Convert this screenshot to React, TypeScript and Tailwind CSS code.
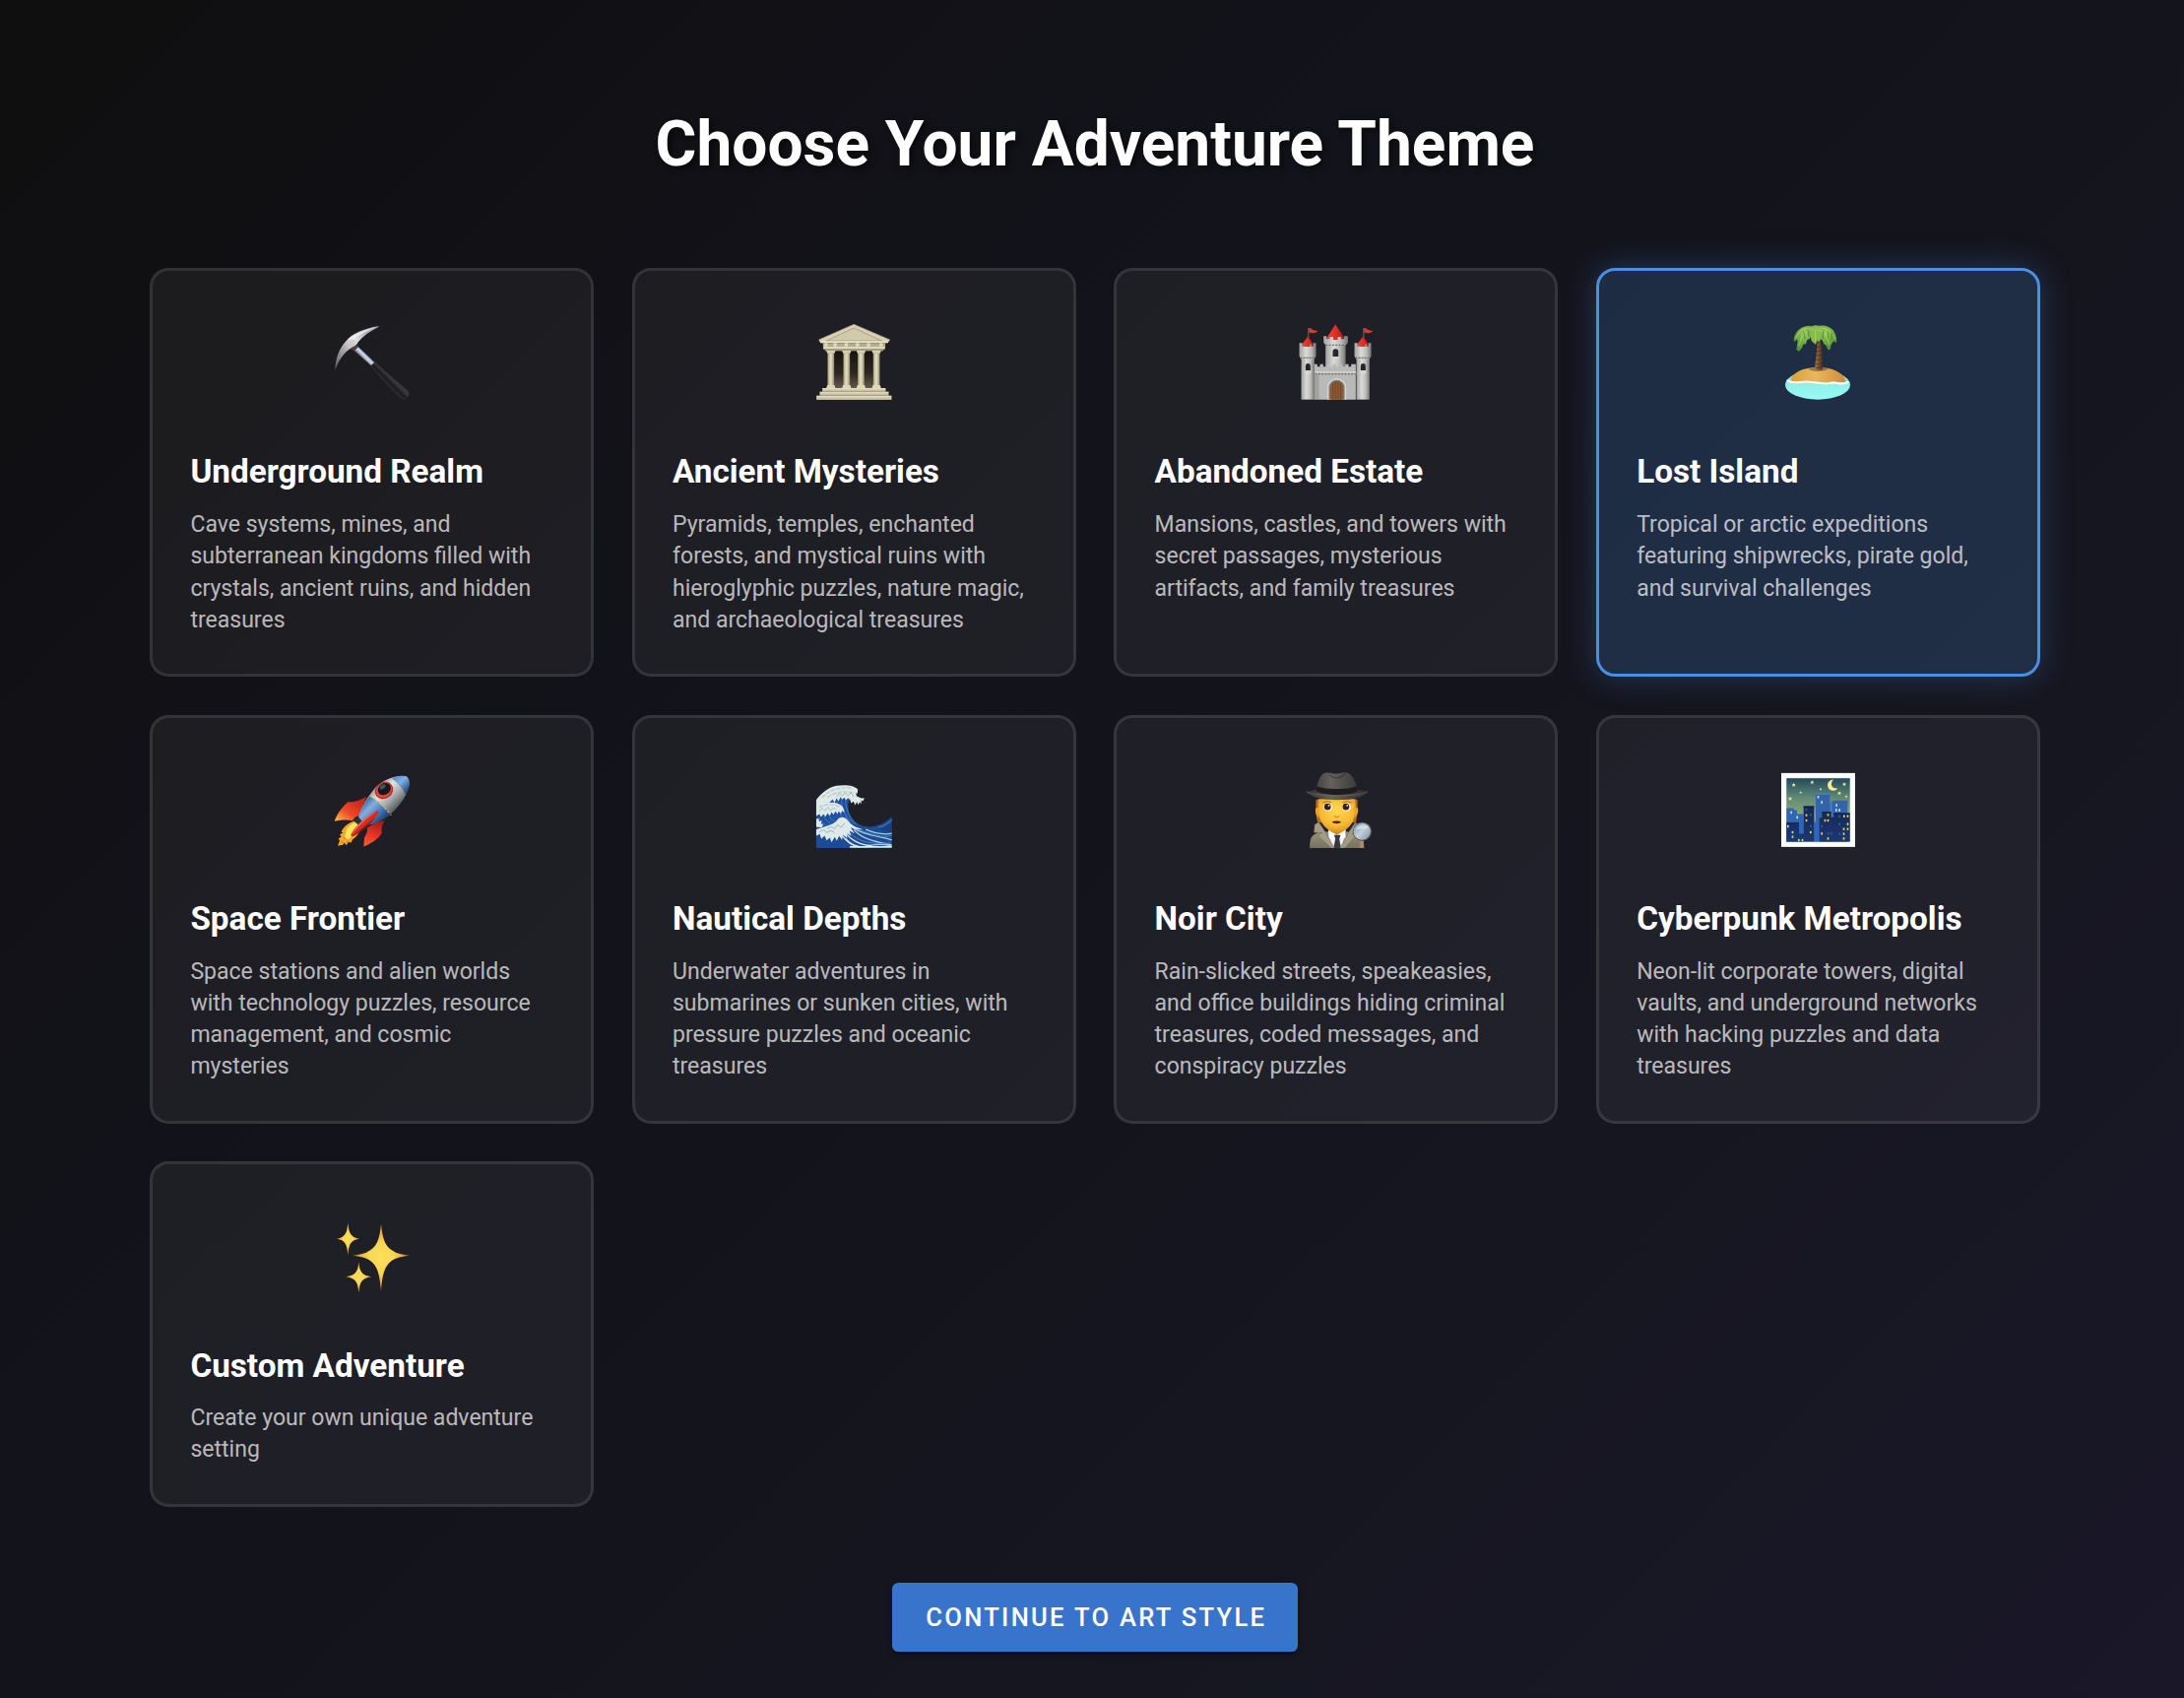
import type { ReactNode } from "react";

function Pickaxe() {
  return (
    <svg viewBox="53 50 240 240" className="size-20">
      <defs>
        <linearGradient id="pkHead" x1="60" y1="190" x2="190" y2="62" gradientUnits="userSpaceOnUse">
          <stop offset="0" stopColor="#5c5a5c" />
          <stop offset=".3" stopColor="#a5a2a4" />
          <stop offset=".55" stopColor="#e8e6e7" />
          <stop offset=".75" stopColor="#b9b7b8" />
          <stop offset="1" stopColor="#8b93a0" />
        </linearGradient>
        <linearGradient id="pkRod" x1="142" y1="158" x2="155" y2="145" gradientUnits="userSpaceOnUse">
          <stop offset="0" stopColor="#7c6f72" />
          <stop offset=".45" stopColor="#d9dbe6" />
          <stop offset=".75" stopColor="#9dbbe8" />
          <stop offset="1" stopColor="#4d5260" />
        </linearGradient>
        <linearGradient id="pkGrip" x1="216" y1="236" x2="230" y2="222" gradientUnits="userSpaceOnUse">
          <stop offset="0" stopColor="#2a2a2a" />
          <stop offset=".5" stopColor="#1b1c1d" />
          <stop offset="1" stopColor="#37383b" />
        </linearGradient>
      </defs>
      <path d="M112 124 L126 121 L181 173 L170 183 L118 137Z" fill="url(#pkRod)" />
      <path d="M170 183 L181 172 C200 190 250 232 281 259 C288 267 283 282 270 284 C262 284 258 279 252 273 C226 249 196 216 170 183Z" fill="url(#pkGrip)" stroke="#414144" strokeWidth="1.2" />
      <path d="M60 196 C61 162 71 132 92 109 C113 84 146 70 193 62 C193 64 192 66 189 67 C168 77 146 91 130 111 C128 118 122 122 115 125 L105 132 C86 144 71 168 60 196Z" fill="url(#pkHead)" />
      <path d="M93 110 L112 101 L129 110 L113 131 L101 130Z" fill="#c9c6c8" opacity=".6" />
      <path d="M99 104 C120 84 151 72 188 64 C160 76 135 87 119 101Z" fill="#f4f3f4" opacity=".75" />
      <path d="M105 132 L115 125 L129 119 L131 126 L118 138Z" fill="#454042" />
    </svg>
  );
}

function Temple() {
  return (
    <svg viewBox="51.6 50 240 240" className="size-20">
      <defs>
        <linearGradient id="tpCol" x1="0" x2="1" y1="0" y2="0">
          <stop offset="0" stopColor="#9b9478" />
          <stop offset=".35" stopColor="#e6dfc3" />
          <stop offset=".65" stopColor="#d8d0b0" />
          <stop offset="1" stopColor="#8c8468" />
        </linearGradient>
        <linearGradient id="tpDark" x1="0" x2="0" y1="0" y2="1">
          <stop offset="0" stopColor="#151311" />
          <stop offset=".6" stopColor="#2c2722" />
          <stop offset="1" stopColor="#655b4a" />
        </linearGradient>
        <linearGradient id="tpStone" x1="0" x2="0" y1="0" y2="1">
          <stop offset="0" stopColor="#eae3c8" />
          <stop offset="1" stopColor="#b9b08f" />
        </linearGradient>
      </defs>
      <rect x="94" y="136" width="156" height="116" fill="url(#tpDark)" />
      <path d="M172 57 L282 104 L276 113 H70 L65 104Z" fill="#d9d1b3" />
      <path d="M172 68 L257 107 H89Z" fill="#d2caab" />
      <path d="M172 57 L282 104 M172 57 L65 104" stroke="#a59d80" strokeWidth="2" fill="none" />
      <path d="M172 68 L257 107 H89Z" fill="none" stroke="#958d70" strokeWidth="2" />
      <rect x="70" y="108" width="206" height="6" fill="#e9e2c8" />
      <rect x="78" y="114" width="190" height="13" fill="#b5ad8f" />
      {[82, 110, 144, 178, 212, 250].map((x) => (
        <rect key={x} x={x} y="114" width="10" height="10" fill="#e1dabd" />
      ))}
      <rect x="79" y="125" width="188" height="8" fill="#e2dabc" />
      <rect x="84" y="133" width="178" height="5" fill="#a69e80" />
      {[92, 140, 184, 231].map((x) => (
        <g key={x}>
          <rect x={x} y="144" width="20" height="100" fill="url(#tpCol)" />
          <path d={`M${x - 4} 137 h28 l-3 8 h-22z`} fill="#d7cfb1" />
          <path d={`M${x - 4} 252 l3 -10 h22 l3 10z`} fill="#ded7ba" />
          <path d={`M${x + 6} 146 v94 M${x + 14} 146 v94`} stroke="#b9b192" strokeWidth="1" />
        </g>
      ))}
      <rect x="76" y="251" width="193" height="11" fill="url(#tpStone)" />
      <rect x="68" y="262" width="210" height="12" fill="url(#tpStone)" />
      <rect x="58" y="274" width="229" height="13" fill="url(#tpStone)" />
    </svg>
  );
}

function Castle() {
  return (
    <svg viewBox="50.4 50 240 240" className="size-20">
      <defs>
        <linearGradient id="csWall" x1="0" x2="1" y1="0" y2="0">
          <stop offset="0" stopColor="#a3a4a1" />
          <stop offset=".4" stopColor="#dadbd8" />
          <stop offset=".7" stopColor="#bdbebb" />
          <stop offset="1" stopColor="#777876" />
        </linearGradient>
        <linearGradient id="csRoof" x1="0" x2="1" y1="0" y2="0">
          <stop offset="0" stopColor="#e8453a" />
          <stop offset=".5" stopColor="#dd3025" />
          <stop offset="1" stopColor="#a01c17" />
        </linearGradient>
      </defs>
      <rect x="138" y="112" width="61" height="80" fill="url(#csWall)" />
      <path d="M168 57 L195 98 V105 H142 V98Z" fill="url(#csRoof)" />
      <path d="M132 93 h9 v9 h10 v-7 h10 v9 h14 v-9 h10 v7 h10 v-9 h11 v20 l-6 7 H138 l-6 -7z" fill="url(#csWall)" />
      <path d="M138 120 H199" stroke="#6f706d" strokeWidth="4" strokeDasharray="6 4" />
      <path d="M160 155 V141 a8.500 9.500 0 0 1 17 0 V155Z" fill="#27262b" />
      <path d="M158 155 H179 V160 L173 165 H164 L158 160Z" fill="#d5d6d3" />
      <path d="M103 178 h10 v8 h8 v-8 h10 v8 h9 v-8 h10 v8 h10 v-8 h10 v8 h9 v-8 h10 v8 h9 v-8 h10 v8 h8 v-8 h14 V286 H103Z" fill="#b9bab7" />
      <rect x="106" y="201" width="126" height="4" fill="#dedfdc" />
      <path d="M106 208 H232" stroke="#777875" strokeWidth="5" strokeDasharray="6 4" />
      <path d="M104 210 V286 H118 V210Z" fill="#777876" opacity=".35" />
      <path d="M143 286 V250 a29 29 0 0 1 58 0 V286Z" fill="#d2d3d0" />
      <path d="M148 286 V250 a24 24 0 0 1 48 0 V286Z" fill="#797a76" />
      <path d="M152 286 V250 a20 20 0 0 1 40 0 V286Z" fill="#8b5a34" />
      <path d="M160 235 V286 M168 231 V286 M176 231 V286 M184 235 V286" stroke="#6b4123" strokeWidth="2" />
      {[0, 168].map((dx) => (
        <g key={dx} transform={`translate(${dx} 0)`}>
          <rect x="64" y="160" width="40" height="126" fill="url(#csWall)" />
          <path d="M86 68 V98" stroke="#7c7776" strokeWidth="2.500" />
          <path d="M87 68 C95 67 96 74 103 75 L115 78 L106 83 C98 85 92 82 87 82Z" fill="#d93a30" />
          <path d="M84 94 L102 118 V125 H66 V118Z" fill="url(#csRoof)" />
          <path d="M58 114 h9 v10 h9 v-7 h0 v8 h15 v-8 h3 v7 h7 v-10 h8 V154 l-6 9 H64 l-6 -9z" fill="url(#csWall)" />
          <path d="M61 159 H106" stroke="#6d6e6b" strokeWidth="4" strokeDasharray="6 3" />
          <path d="M77 198 V185 a7.500 9 0 0 1 15 0 V198Z" fill="#27262b" />
          <path d="M75 198 H94 V203 L88 208 H81 L75 203Z" fill="#d8d9d6" />
        </g>
      ))}
    </svg>
  );
}

function Island() {
  return (
    <svg viewBox="49 50 240 240" className="size-20">
      <defs>
        <linearGradient id="isSand" x1="0" x2="1" y1="0" y2="0">
          <stop offset="0" stopColor="#d99f3a" />
          <stop offset=".45" stopColor="#e8b85e" />
          <stop offset="1" stopColor="#d18a38" />
        </linearGradient>
        <linearGradient id="isSea" x1="0" x2="0" y1="0" y2="1">
          <stop offset="0" stopColor="#8be4e0" />
          <stop offset="1" stopColor="#97fbf4" />
        </linearGradient>
        <radialGradient id="isLeaf" cx=".5" cy=".3" r=".7">
          <stop offset="0" stopColor="#9dcc5a" />
          <stop offset=".6" stopColor="#69a63c" />
          <stop offset="1" stopColor="#4f8f38" />
        </radialGradient>
        <linearGradient id="isTrunk" x1="0" x2="1" y1="0" y2="0">
          <stop offset="0" stopColor="#9a7549" />
          <stop offset=".5" stopColor="#7a5636" />
          <stop offset="1" stopColor="#4a2f20" />
        </linearGradient>
      </defs>
      <ellipse cx="169" cy="241" rx="99" ry="45" fill="url(#isSea)" />
      <path d="M86 228 C92 203 125 188 169 188 C218 188 250 206 256 233 C240 243 229 227 211 233 C186 242 166 231 145 231 C120 229 105 238 86 228Z" fill="url(#isSand)" />
      <path d="M140 194 C153 187 190 187 201 194 C183 202 156 202 140 194Z" fill="#6b4a28" opacity=".6" />
      <path d="M77 228 C91 241 120 229 143 232 C166 235 190 240 207 236 C224 229 235 245 261 233" fill="none" stroke="#fff" strokeWidth="6" strokeLinecap="round" />
      <path d="M166 100 C170 130 162 165 160 194 Q172 200 184 194 C183 160 183 128 176 98Z" fill="url(#isTrunk)" />
      {[112, 125, 138, 151, 164, 177, 188].map((y) => (
        <path key={y} d={`M164 ${y} Q172 ${y + 5} 182 ${y - 4}`} stroke="#35231b" strokeWidth="2" fill="none" />
      ))}
      <path d="M160 64 C139 56 112 66 103 84 C96 94 96 103 97 111 L104 103 L108 108 L106 121 L104 134 L112 139 L120 130 L126 117 L132 118 L137 104 L144 102 L150 92Z" fill="url(#isLeaf)" />
      <path d="M161 66 C176 55 206 60 218 77 C225 88 228 102 226 113 L217 108 L209 121 L207 134 L200 134 L195 122 L188 117 L182 104 L174 102 L167 84Z" fill="url(#isLeaf)" />
      <path d="M150 67 C154 57 174 58 180 69 L181 86 L175 109 L167 105 L163 118 L157 114 L150 107 L146 87Z" fill="#86bb4d" />
      <path d="M154 72 C134 73 119 89 112 123 M165 73 C185 75 199 92 204 118 M162 69 V111 M149 68 C126 68 111 79 102 99 M174 68 C199 67 214 82 222 101" fill="none" stroke="#b7da75" strokeWidth="2" />
      <path d="M126 78 L130 102 M139 73 L142 93 M186 77 L185 101 M200 79 L201 100 M212 83 L211 104" stroke="#3f7530" strokeWidth="2" />
    </svg>
  );
}

function Rocket() {
  return (
    <svg viewBox="53 44.4 240 240" className="size-20">
      <defs>
        <linearGradient id="rkBody" x1="168" y1="105" x2="233" y2="172" gradientUnits="userSpaceOnUse">
          <stop offset="0" stopColor="#8a9094" />
          <stop offset=".35" stopColor="#dfe3e3" />
          <stop offset=".7" stopColor="#a5abac" />
          <stop offset="1" stopColor="#5f6568" />
        </linearGradient>
        <linearGradient id="rkBlue" x1="145" y1="140" x2="205" y2="200" gradientUnits="userSpaceOnUse">
          <stop offset="0" stopColor="#365c92" />
          <stop offset=".35" stopColor="#85aee0" />
          <stop offset=".7" stopColor="#457ab9" />
          <stop offset="1" stopColor="#1f4274" />
        </linearGradient>
        <linearGradient id="rkNose" x1="245" y1="68" x2="283" y2="108" gradientUnits="userSpaceOnUse">
          <stop offset="0" stopColor="#5f93d3" />
          <stop offset=".4" stopColor="#7fb0e8" />
          <stop offset="1" stopColor="#234a85" />
        </linearGradient>
        <linearGradient id="rkFin" x1="125" y1="135" x2="70" y2="205" gradientUnits="userSpaceOnUse">
          <stop offset="0" stopColor="#c9281d" />
          <stop offset=".55" stopColor="#ee4a28" />
          <stop offset="1" stopColor="#f7b545" />
        </linearGradient>
        <linearGradient id="rkFin2" x1="185" y1="205" x2="160" y2="282" gradientUnits="userSpaceOnUse">
          <stop offset="0" stopColor="#a5201a" />
          <stop offset=".5" stopColor="#e93326" />
          <stop offset="1" stopColor="#f0622f" />
        </linearGradient>
      </defs>
      <path d="M118 203 C98 208 82 225 79 236 L84 238 L74 243 L79 250 L70 256 L74 262 L68 278 L84 275 L88 268 L94 276 L101 266 L108 269 L113 259 C128 249 139 230 143 217Z" fill="#f5a52e" />
      <path d="M120 207 C103 213 93 226 92 240 L88 252 L100 258 L111 250 C125 243 134 229 138 219Z" fill="#ffe45c" />
      <path d="M86 252 l5 4 M79 265 l5 3 M96 263 l3 4" stroke="#d85b1c" strokeWidth="3" />
      <path d="M156 128 C132 142 112 146 99 144 C81 159 65 181 58 203 C77 199 98 198 113 201 C118 193 125 187 133 186Z" fill="url(#rkFin)" />
      <path d="M211 201 C205 212 199 225 203 238 C191 257 173 270 147 280 L149 252 C155 244 160 232 157 223 L187 205Z" fill="url(#rkFin2)" />
      <path d="M132 190 C139 160 158 130 185 98 C210 75 242 62 276 66 C286 72 287 86 284 101 C275 132 250 165 222 187 C197 204 169 213 148 216Z" fill="url(#rkBody)" />
      <path d="M132 190 C137 168 150 145 166 126 C188 140 211 164 231 181 C206 201 174 214 148 216Z" fill="url(#rkBlue)" />
      <path d="M240 69 C253 65 264 64 276 66 C287 71 288 86 284 101 C282 109 279 116 275 124 C269 105 255 87 234 73Z" fill="url(#rkNose)" />
      <path d="M234 73 C253 84 269 104 275 124" fill="none" stroke="#656c70" strokeWidth="2.500" strokeDasharray="4 3" />
      <path d="M166 126 C187 137 210 161 231 184" fill="none" stroke="#d8b83c" strokeWidth="3.500" strokeDasharray="9 5" />
      <ellipse cx="209" cy="109" rx="29" ry="25" transform="rotate(-35 209 109)" fill="#b2261f" />
      <ellipse cx="209" cy="108" rx="26" ry="22" transform="rotate(-35 209 108)" fill="#e8433a" />
      <ellipse cx="210" cy="105" rx="21" ry="17" transform="rotate(-35 210 105)" fill="#16191c" />
      <ellipse cx="205" cy="98" rx="10" ry="6" transform="rotate(-35 205 98)" fill="#6d7a80" opacity=".6" />
      <path d="M122 195 L131 190 L144 206 L138 219 L118 203Z" fill="#25333f" />
      <path d="M190 170 C195 174 190 184 183 192 C166 211 137 239 111 250 C108 248 107 244 110 240 C123 214 157 188 190 170Z" fill="#d92a20" />
      <path d="M190 170 C159 192 129 219 111 244 C116 223 151 190 190 170Z" fill="#fc6a55" />
      <path d="M111 250 C137 239 166 211 183 192 L174 198 C151 216 129 237 111 250Z" fill="#7c1a15" />
    </svg>
  );
}

function Wave() {
  return (
    <svg viewBox="51.6 44.4 240 240" className="size-20">
      <defs>
        <linearGradient id="wvBlue" x1="0" x2="1" y1="0" y2="1">
          <stop offset="0" stopColor="#173a7e" />
          <stop offset=".5" stopColor="#2459ac" />
          <stop offset="1" stopColor="#123066" />
        </linearGradient>
        <clipPath id="wvClip"><rect x="57" y="90" width="231" height="195" /></clipPath>
      </defs>
      <g clipPath="url(#wvClip)">
        <path d="M57 285 V138 C80 115 105 100 145 100 L180 125 C155 132 150 150 158 180 C168 205 190 218 219 221 C248 218 268 205 288 190 V285Z" fill="url(#wvBlue)" />
        <path d="M122 132 C118 150 126 175 142 200 M135 132 C132 155 142 182 160 205 M147 130 C144 155 154 185 180 214 M64 190 C72 205 85 217 98 220 M80 188 C88 202 98 210 112 213 M97 188 C105 200 113 205 126 208" fill="none" stroke="#4b8fd2" strokeWidth="2" />
        <path d="M57 138 C74 117 96 99 119 95 C145 90 175 94 184 106 L183 119 L179 116 L180 126 L195 133 L204 132 L200 142 L194 139 L196 150 L190 144 L186 153 L181 144 L176 154 L171 143 L164 148 L160 137 L154 132 L148 139 L143 131 L137 137 L131 129 L126 142 L119 133 L113 147 L108 137 L97 146 C116 145 136 151 140 163 L144 176 L136 171 L133 180 L126 172 L122 181 L116 173 L110 183 L104 175 L99 187 L92 179 L85 190 L80 181 L72 190 L67 181 L57 188Z" fill="#dfe9e8" />
        <path d="M75 131 C98 107 125 99 165 101 M92 130 C111 115 138 110 170 116 M66 160 C86 150 111 149 130 160" fill="none" stroke="#b9cccd" strokeWidth="4" strokeDasharray="13 4" />
        <path d="M120 128 L128 118 L137 126 L145 116 L154 125 L164 115 L171 128 M67 174 L75 162 L84 171 L93 160 L101 171 L110 161 L117 169" fill="none" stroke="#9db5bd" strokeWidth="2.500" />
        <path d="M57 197 L64 194 L67 204 L74 200 L72 211 L79 212 L75 222 L57 220Z" fill="#dfe9e8" />
        <path d="M57 228 C80 216 107 215 122 198 C132 187 145 190 153 200 C175 222 226 224 255 216 C270 210 281 198 288 191 V204 C272 220 258 224 244 225 C268 234 281 238 288 234 V285 H57Z" fill="#1c4d94" />
        <path d="M163 219 C205 247 244 246 288 260 M172 229 C204 263 250 267 288 275 M208 228 C241 242 267 244 288 240 M147 255 C161 275 181 282 208 281 C230 274 255 269 288 279" fill="none" stroke="#a9c9e0" strokeWidth="4" />
        <path d="M187 229 C226 243 260 255 288 246 M162 239 C182 267 237 275 284 269 M247 221 C266 218 277 208 288 198" fill="none" stroke="#4d82bc" strokeWidth="3" />
        <path d="M57 228 C84 218 110 215 122 198 C132 187 145 190 153 200 C165 216 178 222 200 228 C182 229 169 225 162 221 L174 240 L159 232 L164 248 L149 238 L152 255 L139 244 L136 260 L127 248 L120 263 L114 251 L104 267 L99 253 L89 261 L83 247 L73 257 L68 242 L57 248Z" fill="#dfe9e8" />
        <path d="M90 226 L105 219 L112 226 L123 214 L133 222 L144 208 M67 235 L80 229 L89 237 L103 231 L114 238" fill="none" stroke="#9db5bd" strokeWidth="3" />
        <path d="M135 244 C147 262 166 279 192 281 M146 236 C160 258 190 276 226 277" fill="none" stroke="#dfe9e8" strokeWidth="4" />
        <path d="M160 281 H288" stroke="#dfe9e8" strokeWidth="5" />
      </g>
    </svg>
  );
}

function Detective() {
  return (
    <svg viewBox="50.4 44.4 240 240" className="size-20">
      <defs>
        <radialGradient id="dtFace" cx=".5" cy=".35" r=".7">
          <stop offset="0" stopColor="#ffd84e" />
          <stop offset=".65" stopColor="#f5b934" />
          <stop offset="1" stopColor="#d18c1e" />
        </radialGradient>
        <linearGradient id="dtHat" x1="0" x2="1" y1="0" y2="0">
          <stop offset="0" stopColor="#2e2d2c" />
          <stop offset=".4" stopColor="#64615e" />
          <stop offset="1" stopColor="#2c2b2a" />
        </linearGradient>
        <linearGradient id="dtCoat" x1="0" x2="0" y1="0" y2="1">
          <stop offset="0" stopColor="#9a927b" />
          <stop offset="1" stopColor="#777160" />
        </linearGradient>
        <linearGradient id="dtLens" x1="0" x2="1" y1="0" y2="1">
          <stop offset="0" stopColor="#8094a3" />
          <stop offset=".5" stopColor="#c3d0db" />
          <stop offset="1" stopColor="#7b8fa0" />
        </linearGradient>
      </defs>
      <path d="M109 137 H235 C236 160 235 190 230 207 H114 C108 190 107 160 109 137Z" fill="#b06b24" />
      <path d="M90 285 C90 267 91 250 103 244 L119 235 H225 L244 245 C253 252 255 267 256 285Z" fill="url(#dtCoat)" />
      <path d="M145 223 H201 L188 285 H157Z" fill="#f1f2f5" />
      <path d="M146 208 H199 V229 L173 245 L146 229Z" fill="#cc8b20" />
      <path d="M116 135 H228 C231 174 228 207 203 226 C185 240 161 240 143 226 C118 207 113 174 116 135Z" fill="url(#dtFace)" />
      <path d="M110 162 C104 164 107 187 118 192 V160Z M234 162 C240 164 237 187 226 192 V160Z" fill="#e9a22c" />
      <path d="M147 231 L173 246 L163 258 L153 251 L148 267Z M198 231 L173 246 L184 258 L194 251 L200 267Z" fill="#fff" />
      <path d="M164 245 H184 L180 257 L185 285 H162 L168 257Z" fill="#353840" />
      <path d="M117 206 L105 213 L103 237 L128 238 L114 246 L156 285 H166 C151 263 142 239 117 206Z M228 207 L242 213 L239 239 L218 240 L230 247 L196 285 H181 C194 266 205 239 228 207Z" fill="#a39b84" stroke="#6c6656" strokeWidth="1.500" />
      <ellipse cx="145" cy="160" rx="14" ry="12" fill="#fff9ee" />
      <ellipse cx="202" cy="160" rx="14" ry="12" fill="#fff9ee" />
      <circle cx="144" cy="159" r="10" fill="#3b1e14" />
      <circle cx="200" cy="159" r="10" fill="#3b1e14" />
      <circle cx="148" cy="155" r="2.500" fill="#fff" />
      <circle cx="204" cy="155" r="2.500" fill="#fff" />
      <path d="M129 146 Q140 139 155 145 M190 145 Q204 139 217 146" fill="none" stroke="#a56a1f" strokeWidth="3" />
      <path d="M164 187 Q172 194 181 187" stroke="#d8932a" strokeWidth="4" fill="none" />
      <path d="M157 204 Q172 200 186 204 Q182 210 172 210 Q161 210 157 204Z" fill="#532315" />
      <path d="M110 106 C114 80 124 56 139 55 C151 53 160 59 171 58 C181 58 192 51 206 56 C221 62 230 83 235 107 C253 111 262 110 267 112 C257 130 221 138 173 138 C122 138 88 128 78 112 C90 112 101 110 110 106Z" fill="url(#dtHat)" />
      <path d="M112 97 C141 107 204 107 233 97 L236 112 C207 126 139 126 109 112Z" fill="#1d1d1e" />
      <path d="M80 113 C110 129 235 130 266 113" fill="none" stroke="#706b66" strokeWidth="2" />
      <path d="M148 59 Q173 84 197 58" fill="none" stroke="#2f2d2c" strokeWidth="4" opacity=".6" />
      <path d="M243 263 L253 261 V285 H242Z" fill="#b18a62" />
      <circle cx="250" cy="234" r="29" fill="#4b5055" />
      <circle cx="249" cy="234" r="26" fill="url(#dtLens)" />
      <path d="M230 229 C234 214 253 209 266 221 C258 230 242 225 230 229Z" fill="#e9f1f7" opacity=".55" />
    </svg>
  );
}

function NightCity() {
  return (
    <svg viewBox="49 44.4 240 240" className="size-20">
      <defs>
        <linearGradient id="ncSky" x1="0" x2="0" y1="0" y2="1">
          <stop offset="0" stopColor="#22495c" />
          <stop offset=".3" stopColor="#5f8877" />
          <stop offset=".6" stopColor="#8da878" />
          <stop offset="1" stopColor="#4d7d9c" />
        </linearGradient>
        <linearGradient id="ncMid" x1="0" x2="0" y1="0" y2="1">
          <stop offset="0" stopColor="#36639f" />
          <stop offset="1" stopColor="#2b67c9" />
        </linearGradient>
        <linearGradient id="ncDark" x1="0" x2="0" y1="0" y2="1">
          <stop offset="0" stopColor="#152653" />
          <stop offset="1" stopColor="#1b3874" />
        </linearGradient>
      </defs>
      <rect x="58" y="56" width="225" height="225" fill="#fff" />
      <rect x="72" y="70" width="197" height="197" fill="#dfe2e0" />
      <rect x="74" y="72" width="193" height="193" fill="url(#ncSky)" />
      <path d="M74 163 H96 V169 H106 V181 H126 V265 H74Z M163 117 H206 V150 L216 140 H260 V265 H158 V205 H163Z" fill="url(#ncMid)" />
      <path d="M163 117 H206 V122 H163Z M207 148 H213 V265 H207Z" fill="#4f82bd" />
      <path d="M74 207 H112 V241 H126 V157 H158 V265 H74Z M174 192 H182 V174 H210 V191 H218 V178 H267 V265 H174Z" fill="url(#ncDark)" />
      <path d="M74 207 H112 V210 H74Z M126 157 H158 V161 H126Z M182 174 H210 V178 H182Z M218 178 H267 V182 H218Z" fill="#142247" />
      {[[86, 172], [104, 187], [168, 125], [179, 141], [224, 150], [223, 165], [233, 165]].map(([x, y]) => (
        <rect key={`${x}-${y}`} x={x} y={y} width="5" height="8" fill="#b6e2f3" />
      ))}
      {[[132, 181], [132, 197], [145, 233], [90, 233], [90, 247], [76, 215], [109, 257], [120, 257], [189, 197], [198, 197], [198, 180], [179, 237], [198, 252], [247, 184], [258, 184], [258, 208], [246, 223], [258, 223], [246, 238], [246, 252]].map(([x, y]) => (
        <rect key={`${x}-${y}`} x={x} y={y} width="5" height="7" fill="#e7dc5e" />
      ))}
      {[[132, 164], [145, 180], [145, 214], [179, 215], [198, 237], [208, 237], [233, 184], [233, 208], [233, 238]].map(([x, y]) => (
        <rect key={`${x}-${y}`} x={x} y={y} width="5" height="7" fill="#2e6288" />
      ))}
      <path d="M217 76 A17 17 0 1 0 230 103 C211 105 205 88 217 76Z" fill="#f5eb96" />
      {[[96, 92, 6], [152, 84, 6], [250, 90, 6], [235, 117, 6], [85, 134, 6], [117, 115, 4], [178, 105, 4], [256, 127, 4]].map(([x, y, r]) => (
        <path key={`${x}-${y}`} d={`M${x} ${y - r} l${r * 0.3} ${r * 0.65} h${r * 0.7} l${-r * 0.5} ${r * 0.5} l${r * 0.2} ${r * 0.8} l${-r * 0.7} ${-r * 0.4} l${-r * 0.7} ${r * 0.4} l${r * 0.2} ${-r * 0.8} l${-r * 0.5} ${-r * 0.5} h${r * 0.7}z`} fill="#f3e98e" />
      ))}
    </svg>
  );
}

function Sparkles() {
  return (
    <svg viewBox="53 26 240 240" className="size-20">
      <defs>
        <radialGradient id="spFill" cx=".5" cy=".5" r=".5">
          <stop offset="0" stopColor="#fbe05c" />
          <stop offset=".45" stopColor="#f8d552" />
          <stop offset=".8" stopColor="#e2a543" />
          <stop offset="1" stopColor="#a8692f" />
        </radialGradient>
      </defs>
      <path d="M200 51 C206 115 218 141 287 148 C218 155 206 180 200 258 C194 180 182 155 113 148 C182 141 194 115 200 51Z" fill="url(#spFill)" />
      <path d="M99 47 C102 80 106 92 134 97 C106 102 102 114 99 148 C96 114 92 102 65 97 C92 92 96 80 99 47Z" fill="url(#spFill)" />
      <path d="M132 167 C135 197 140 208 171 213 C140 218 135 229 132 263 C129 229 124 218 92 213 C124 208 129 197 132 167Z" fill="url(#spFill)" />
    </svg>
  );
}

type Theme = { title: string; text: string; icon: ReactNode };

const themes: Theme[] = [
  { title: "Underground Realm", text: "Cave systems, mines, and subterranean kingdoms filled with crystals, ancient ruins, and hidden treasures", icon: <Pickaxe /> },
  { title: "Ancient Mysteries", text: "Pyramids, temples, enchanted forests, and mystical ruins with hieroglyphic puzzles, nature magic, and archaeological treasures", icon: <Temple /> },
  { title: "Abandoned Estate", text: "Mansions, castles, and towers with secret passages, mysterious artifacts, and family treasures", icon: <Castle /> },
  { title: "Lost Island", text: "Tropical or arctic expeditions featuring shipwrecks, pirate gold, and survival challenges", icon: <Island /> },
  { title: "Space Frontier", text: "Space stations and alien worlds with technology puzzles, resource management, and cosmic mysteries", icon: <Rocket /> },
  { title: "Nautical Depths", text: "Underwater adventures in submarines or sunken cities, with pressure puzzles and oceanic treasures", icon: <Wave /> },
  { title: "Noir City", text: "Rain-slicked streets, speakeasies, and office buildings hiding criminal treasures, coded messages, and conspiracy puzzles", icon: <Detective /> },
  { title: "Cyberpunk Metropolis", text: "Neon-lit corporate towers, digital vaults, and underground networks with hacking puzzles and data treasures", icon: <NightCity /> },
  { title: "Custom Adventure", text: "Create your own unique adventure setting", icon: <Sparkles /> },
];

function ThemeCard({ theme, selected }: { theme: Theme; selected: boolean }) {
  return (
    <button
      className={`flex flex-col rounded-[19.2px] border-[3px] p-[38.4px] text-left ${
        selected
          ? "border-[#4a90e2] bg-[#4a90e2]/20 shadow-[0_0_32px_rgba(74,144,226,0.3)]"
          : "border-white/10 bg-white/5"
      }`}
    >
      <span className="flex h-[138.8px] w-full justify-center pt-[13.3px]">{theme.icon}</span>
      <span className="text-[33.28px] leading-[54px] font-bold text-white">{theme.title}</span>
      <span className="mt-[10.6px] text-[23.04px] leading-[1.4] text-white/70">{theme.text}</span>
    </button>
  );
}

export default function App() {
  return (
    <main className="flex h-[1724px] w-full flex-col items-center overflow-hidden bg-[linear-gradient(135deg,#0f0f0f_0%,#101013_10%,#12121a_35%,#161620_70%,#191728_100%)] pl-[6px] font-['Roboto',sans-serif]">
      <h1 className="mt-[109px] h-[163.2px] text-[64px] leading-[75px] font-bold text-white [text-shadow:3.2px_3.2px_6.4px_rgba(0,0,0,0.5)]">
        Choose Your Adventure Theme
      </h1>
      <div className="grid w-[1920px] grid-cols-4 gap-[38.4px]">
        {themes.map((t) => (
          <ThemeCard key={t.title} theme={t} selected={t.title === "Lost Island"} />
        ))}
      </div>
      <button className="mt-[76.8px] h-[70px] w-[412px] shrink-0 rounded-[6.4px] bg-[#3874cb] pl-[2.6px] text-[25.6px] font-medium tracking-[0.0892857em] text-white shadow-[0_4.8px_1.6px_-3.2px_rgba(0,0,0,0.2),0_3.2px_3.2px_rgba(0,0,0,0.14),0_1.6px_8px_rgba(0,0,0,0.12)]">
        CONTINUE TO ART STYLE
      </button>
    </main>
  );
}
